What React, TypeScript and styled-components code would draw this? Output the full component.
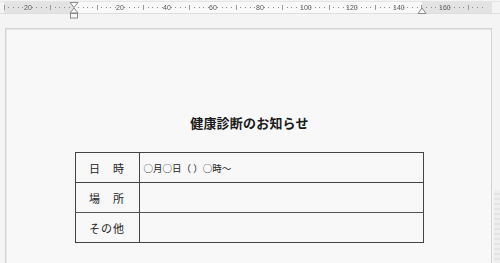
import React from 'react';
import styled, { createGlobalStyle } from 'styled-components';

const GlobalStyle = createGlobalStyle`
  html, body {
    margin: 0;
    padding: 0;
    background: #f4f4f4;
    overflow: hidden;
  }
  body {
    width: 500px;
    height: 263px;
    font-family: "Noto Sans CJK JP", "Liberation Sans", sans-serif;
  }
`;

// ルーラー: 1mm = 2.325px, 0mm は x=74
const ORIGIN = 74;
const MM = 2.325;
const START_MM = -30;
const END_MM = 176;

const rows = [
  { label: '日　時', value: '○月○日（ ）○時～' },
  { label: '場　所', value: '' },
  { label: 'その他', value: '' }
];

const Ruler = () => {
  const cells: number[] = [];
  for (let mm = START_MM; mm <= END_MM; mm += 2) cells.push(mm);
  return (
    <RulerBar>
      <Scale style={{ marginLeft: ORIGIN + (START_MM - 1) * MM }}>
        {cells.map((mm) => (
          <Cell key={mm}>
            {mm === 0 ? null : mm % 20 === 0 ? (
              <RulerNum>{Math.abs(mm)}</RulerNum>
            ) : (
              <Tick $line={mm % 10 === 0} />
            )}
          </Cell>
        ))}
      </Scale>
      <Marker $left={ORIGIN - 5} width="10" height="17" viewBox="0 0 10 17">
        <path d="M1 0.5 H9 L5 5.5 Z" fill="#fafafa" stroke="#8a8a8a" />
        <path d="M5 6 L9 11 H1 Z" fill="#fafafa" stroke="#8a8a8a" />
        <rect x="1.5" y="11.5" width="7" height="4.5" fill="#fafafa" stroke="#8a8a8a" />
      </Marker>
      <Marker $left={417} width="10" height="17" viewBox="0 0 10 17">
        <path d="M5 6 L9 11.5 H1 Z" fill="#fafafa" stroke="#8a8a8a" />
      </Marker>
    </RulerBar>
  );
};

export default function App() {
  return (
    <>
      <GlobalStyle />
      <Screen>
        <Ruler />
        <Page>
          <Title>健康診断のお知らせ</Title>
          <InfoTable>
            <tbody>
              {rows.map((r) => (
                <Row key={r.label}>
                  <LabelCell>{r.label}</LabelCell>
                  <ValueCell>{r.value}</ValueCell>
                </Row>
              ))}
            </tbody>
          </InfoTable>
        </Page>
        <SideStrip />
      </Screen>
    </>
  );
}

const Screen = styled.div`
  position: relative;
  width: 500px;
  height: 263px;
  overflow: hidden;
  padding-top: 1px;
  box-sizing: border-box;
`;

const RulerBar = styled.div`
  position: relative;
  height: 11px;
  border-top: 1px solid #e6e6e6;
  border-bottom: 1px solid #dedede;
  background: linear-gradient(
    to right,
    #f4f4f4 0px,
    #f4f4f4 4px,
    #e3e3e3 4px,
    #e3e3e3 74px,
    #f9f9f9 74px,
    #f9f9f9 422px,
    #e3e3e3 422px,
    #e3e3e3 492px,
    #f4f4f4 492px
  );
`;

const Scale = styled.div`
  display: flex;
  height: 100%;
`;

const Cell = styled.div`
  flex: 0 0 ${2 * MM}px;
  width: ${2 * MM}px;
  min-width: 0;
  display: flex;
  justify-content: center;
  align-items: center;
`;

const Tick = styled.div<{ $line: boolean }>`
  flex: 0 0 1px;
  height: ${(p) => (p.$line ? '5px' : '1px')};
  background: ${(p) => (p.$line ? '#9a9a9a' : '#8c8c8c')};
`;

const RulerNum = styled.span`
  flex: none;
  font-family: "Liberation Sans", sans-serif;
  font-size: 7px;
  line-height: 11px;
  color: #555;
  white-space: nowrap;
  will-change: transform;
`;

const Marker = styled.svg<{ $left: number }>`
  position: absolute;
  top: 0;
  left: ${(p) => p.$left}px;
  overflow: visible;
`;

const Page = styled.div`
  margin: 14px 0 0 5px;
  width: 485px;
  height: 260px;
  background: #f8f8f8;
  border: 1px solid #d4d4d4;
  box-shadow: inset 1px 1px 0 #e6e6e6;
  display: flex;
  flex-direction: column;
  align-items: center;
`;

const Title = styled.h1`
  margin: 86px 0 0 2px;
  font-size: 13px;
  line-height: 16px;
  font-weight: 700;
  color: #1a1a1a;
  letter-spacing: 0.2px;
`;

const InfoTable = styled.table`
  margin-top: 21px;
  margin-left: 1px;
  width: 349px;
  border-collapse: collapse;
  table-layout: fixed;
  border: 1px solid #444;
`;

const Row = styled.tr`
  height: 30px;
  &:nth-child(2) td {
    border-bottom: 1px solid #555;
  }
`;

const LabelCell = styled.td`
  width: 63px;
  border: 1px solid #444;
  text-align: center;
  font-size: 11px;
  color: #222;
  padding: 0;
  letter-spacing: 1px;
`;

const ValueCell = styled.td`
  border: 1px solid #444;
  font-size: 9.5px;
  color: #222;
  padding: 0 0 0 4px;
`;

const SideStrip = styled.div`
  position: absolute;
  right: 0;
  top: 190px;
  width: 6px;
  height: 73px;
  background: repeating-linear-gradient(
    to bottom,
    #eeeeee 0px,
    #eeeeee 3px,
    #e4e4e4 3px,
    #e4e4e4 5px
  );
`;
